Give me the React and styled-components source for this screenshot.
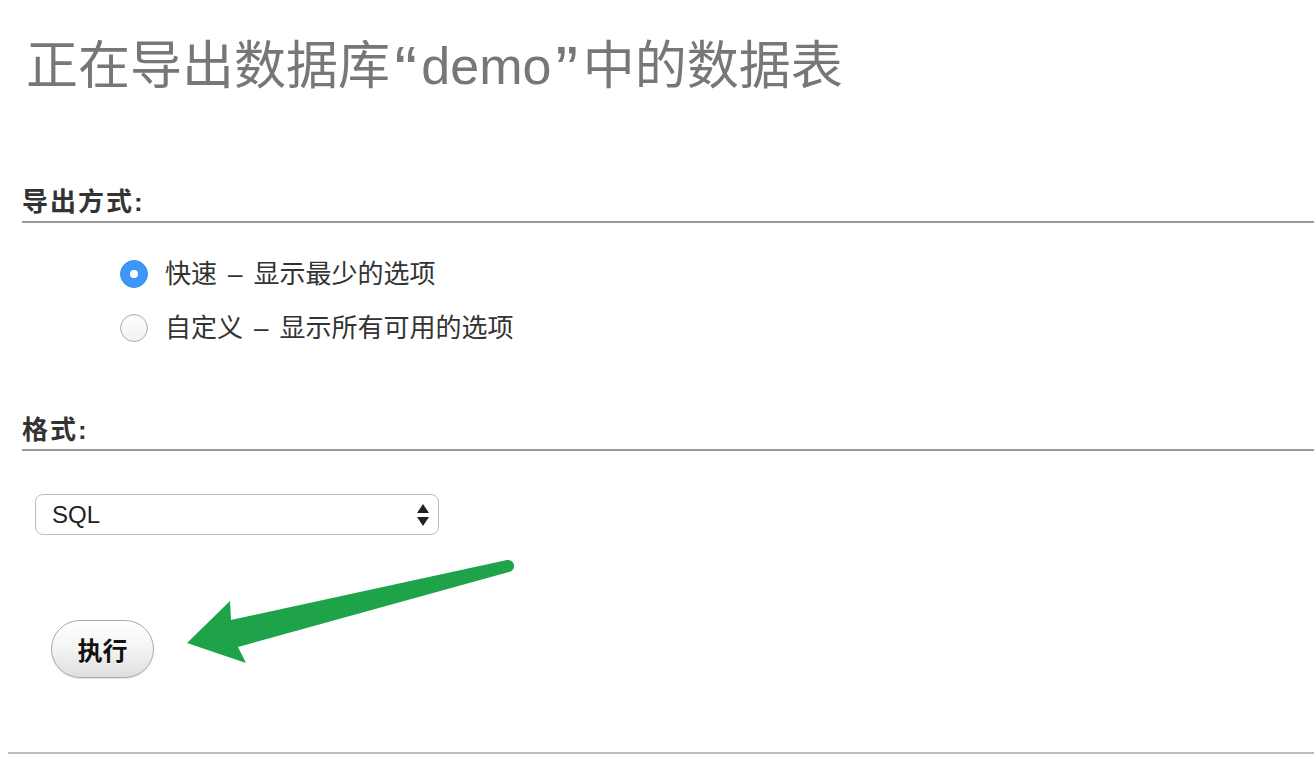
import React from 'react'
import styled, { createGlobalStyle } from 'styled-components'

const GlobalStyle = createGlobalStyle`
  html, body {
    margin: 0;
    padding: 0;
    background: #ffffff;
  }
  body {
    font-family: 'Liberation Sans', 'Noto Sans CJK SC', sans-serif;
  }
`

const App = () => {
  return (
    <Root>
      <GlobalStyle />
      <Content>
        <Title>
          正在导出数据库<Quote>“</Quote>demo<Quote>”</Quote>中的数据表
        </Title>

        <Heading top={86}>导出方式:</Heading>
        <Options>
          <Option>
            <Radio checked />
            <Label>
              快速<Dash>–</Dash>显示最少的选项
            </Label>
          </Option>
          <Option>
            <Radio />
            <Label>
              自定义<Dash>–</Dash>显示所有可用的选项
            </Label>
          </Option>
        </Options>

        <Heading top={64}>格式:</Heading>
        <Select>
          <SelectText>SQL</SelectText>
          <svg width="14" height="24" viewBox="0 0 14 24">
            <path d="M7 1 L13 10 L1 10 Z" fill="#222" />
            <path d="M1 14 L13 14 L7 23 Z" fill="#222" />
          </svg>
        </Select>

        <Button>执行</Button>
      </Content>
      <Rule />
      <Arrow width="340" height="120" viewBox="180 550 340 120">
        <path
          d="M507 560 L231 620 L230 601 L187 643 L246 663 L238 647 L509 572 A6 6 0 0 0 507 560 Z"
          fill="#1ea34b"
        />
      </Arrow>
    </Root>
  )
}

const Root = styled.div`
  position: relative;
  width: 1314px;
  height: 776px;
  overflow: hidden;
  padding-left: 8px;
  box-sizing: border-box;
`

const Content = styled.div`
  padding-left: 14px;
  display: flex;
  flex-direction: column;
  align-items: flex-start;
`

const Title = styled.h1`
  margin: 34px 0 0 4px;
  height: 64px;
  line-height: 64px;
  font-size: 52px;
  font-weight: 400;
  color: #777777;
  white-space: nowrap;
`

const Quote = styled.span`
  display: inline-block;
  margin: 0 7px;
  transform: scale(1.3);
  transform-origin: 50% 30%;
`

const Heading = styled.h2`
  align-self: stretch;
  margin: ${p => p.top}px 0 0 0;
  height: 36px;
  line-height: 36px;
  padding-bottom: 1px;
  border-bottom: 2px solid #9a9a9a;
  font-size: 26px;
  font-weight: 700;
  letter-spacing: 2px;
  color: #333333;
`

const Options = styled.div`
  margin: 31px 0 0 98px;
  display: flex;
  flex-direction: column;
  gap: 14px;
`

const Option = styled.label`
  display: flex;
  align-items: center;
  gap: 17px;
  height: 40px;
`

const Radio = styled.span`
  width: 28px;
  height: 28px;
  border-radius: 50%;
  box-sizing: border-box;
  display: flex;
  align-items: center;
  justify-content: center;
  background: ${p => (p.checked ? '#3d96f8' : 'linear-gradient(#ffffff, #f1f1f1)')};
  border: ${p => (p.checked ? '1px solid #3a8ee8' : '1px solid #b0b0b0')};
  box-shadow: ${p => (p.checked ? 'none' : 'inset 0 1px 2px rgba(0,0,0,0.08)')};
  &::after {
    content: '';
    display: ${p => (p.checked ? 'block' : 'none')};
    width: 8px;
    height: 8px;
    border-radius: 50%;
    background: #ffffff;
  }
`

const Label = styled.span`
  font-size: 26px;
  color: #333333;
  line-height: 40px;
  white-space: nowrap;
`

const Dash = styled.span`
  margin: 0 11px;
`

const Select = styled.div`
  margin: 43px 0 0 13px;
  width: 404px;
  height: 41px;
  box-sizing: border-box;
  border: 1px solid #bdbdbd;
  border-radius: 8px;
  background: #ffffff;
  display: flex;
  align-items: center;
  justify-content: space-between;
  padding: 0 8px 0 16px;
`

const SelectText = styled.span`
  font-size: 24px;
  color: #222222;
`

const Button = styled.button`
  margin: 85px 0 0 29px;
  width: 103px;
  height: 58px;
  border-radius: 29px;
  border: 1px solid #a9a9a9;
  background: linear-gradient(#ffffff 0%, #f4f4f4 50%, #dedede 100%);
  box-shadow: 0 1px 1px rgba(0, 0, 0, 0.1);
  font-family: 'Noto Sans CJK SC', sans-serif;
  font-size: 25px;
  font-weight: 700;
  color: #111111;
  text-shadow: 0 1px 0 #ffffff;
  padding: 0;
`

const Rule = styled.div`
  margin-top: 74px;
  height: 2px;
  background: #bdbdbd;
`

const Arrow = styled.svg`
  position: absolute;
  left: 180px;
  top: 550px;
  pointer-events: none;
`

export default App
